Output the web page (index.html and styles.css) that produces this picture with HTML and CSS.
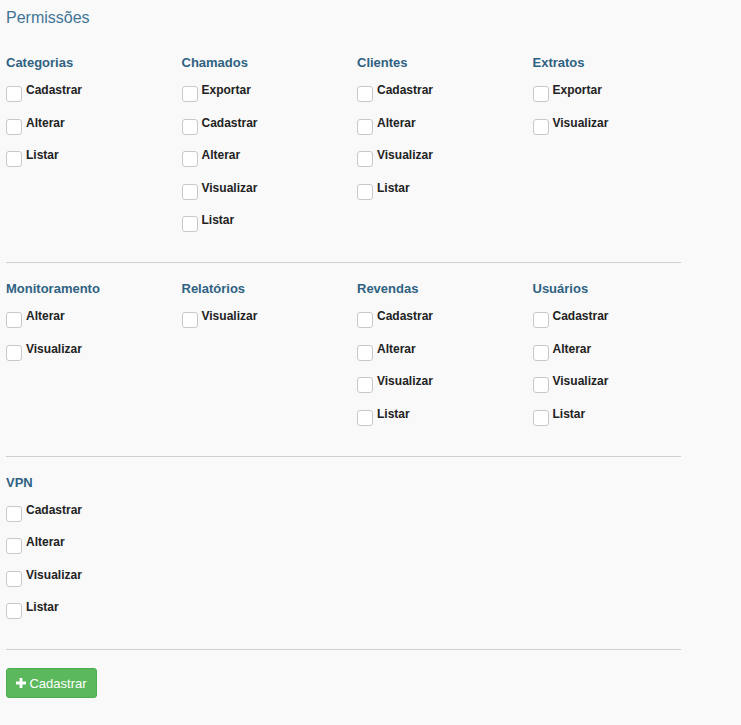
FILE: index.html
```html
<!DOCTYPE html>
<html lang="pt-BR">
<head>
    <meta charset="UTF-8">
    <meta name="viewport" content="width=device-width, initial-scale=1.0">
    <title>Permissões</title>
    <link rel="stylesheet" href="styles.css">
</head>
<body>
    <h2 class="page-title">Permissões</h2>

    <form class="perm-form">
        <div class="perm-row">
            <div class="perm-group">
                <h4>Categorias</h4>
                <label class="perm-item"><input type="checkbox"><span>Cadastrar</span></label>
                <label class="perm-item"><input type="checkbox"><span>Alterar</span></label>
                <label class="perm-item"><input type="checkbox"><span>Listar</span></label>
            </div>
            <div class="perm-group">
                <h4>Chamados</h4>
                <label class="perm-item"><input type="checkbox"><span>Exportar</span></label>
                <label class="perm-item"><input type="checkbox"><span>Cadastrar</span></label>
                <label class="perm-item"><input type="checkbox"><span>Alterar</span></label>
                <label class="perm-item"><input type="checkbox"><span>Visualizar</span></label>
                <label class="perm-item"><input type="checkbox"><span>Listar</span></label>
            </div>
            <div class="perm-group">
                <h4>Clientes</h4>
                <label class="perm-item"><input type="checkbox"><span>Cadastrar</span></label>
                <label class="perm-item"><input type="checkbox"><span>Alterar</span></label>
                <label class="perm-item"><input type="checkbox"><span>Visualizar</span></label>
                <label class="perm-item"><input type="checkbox"><span>Listar</span></label>
            </div>
            <div class="perm-group">
                <h4>Extratos</h4>
                <label class="perm-item"><input type="checkbox"><span>Exportar</span></label>
                <label class="perm-item"><input type="checkbox"><span>Visualizar</span></label>
            </div>
        </div>
        <hr>

        <div class="perm-row">
            <div class="perm-group">
                <h4>Monitoramento</h4>
                <label class="perm-item"><input type="checkbox"><span>Alterar</span></label>
                <label class="perm-item"><input type="checkbox"><span>Visualizar</span></label>
            </div>
            <div class="perm-group">
                <h4>Relatórios</h4>
                <label class="perm-item"><input type="checkbox"><span>Visualizar</span></label>
            </div>
            <div class="perm-group">
                <h4>Revendas</h4>
                <label class="perm-item"><input type="checkbox"><span>Cadastrar</span></label>
                <label class="perm-item"><input type="checkbox"><span>Alterar</span></label>
                <label class="perm-item"><input type="checkbox"><span>Visualizar</span></label>
                <label class="perm-item"><input type="checkbox"><span>Listar</span></label>
            </div>
            <div class="perm-group">
                <h4>Usuários</h4>
                <label class="perm-item"><input type="checkbox"><span>Cadastrar</span></label>
                <label class="perm-item"><input type="checkbox"><span>Alterar</span></label>
                <label class="perm-item"><input type="checkbox"><span>Visualizar</span></label>
                <label class="perm-item"><input type="checkbox"><span>Listar</span></label>
            </div>
        </div>
        <hr>

        <div class="perm-row">
            <div class="perm-group">
                <h4>VPN</h4>
                <label class="perm-item"><input type="checkbox"><span>Cadastrar</span></label>
                <label class="perm-item"><input type="checkbox"><span>Alterar</span></label>
                <label class="perm-item"><input type="checkbox"><span>Visualizar</span></label>
                <label class="perm-item"><input type="checkbox"><span>Listar</span></label>
            </div>
        </div>
        <hr>

        <button type="button" class="btn-success">
            <svg class="icon-plus" width="10" height="10" viewBox="0 0 10 10"><path d="M3.6 0h2.8v3.6H10v2.8H6.4V10H3.6V6.4H0V3.6h3.6z" fill="#fff"/></svg>
            Cadastrar
        </button>
    </form>
</body>
</html>
```

FILE: styles.css
```css
body {
    background-color: #f9f9f9;
    color: #333;
    font-family: "Liberation Sans", Arial, sans-serif;
    margin: 0;
    padding: 8px 6px 0 6px;
}

.page-title {
    margin: 0 0 25px 0;
    font-size: 16px;
    line-height: 20px;
    font-weight: normal;
    color: #3f7497;
}

.perm-row {
    display: grid;
    grid-template-columns: repeat(4, 175.5px);
}

.perm-group {
    display: flex;
    flex-direction: column;
    gap: 12.5px;
}

.perm-group h4 {
    margin: 0 0 -3.5px 0; /* 9px between title and first checkbox row */
    font-size: 13px;
    line-height: 20px;
    font-weight: bold;
    color: #2f6282;
}

.perm-item {
    display: flex;
    align-items: flex-start;
    font-size: 12px;
    line-height: 16px;
    font-weight: bold;
    color: #222;
    height: 20px;
}

/* custom square box, like the bootstrap-ish theme */
.perm-item input {
    appearance: none;
    -webkit-appearance: none;
    width: 16px;
    height: 16px;
    margin: 4px 4px 0 0;
    border: 1px solid #c8c8c8;
    border-radius: 3px;
    background: #fff;
    flex-shrink: 0;
}

hr {
    width: 675px;
    margin: 30px 0 16px 0;
    border: 0;
    border-top: 1px solid #cfcfcf;
}

.btn-success {
    margin-top: 18px; /* collapses with the hr's bottom margin */
    height: 30px;
    width: 91px;
    padding: 0;
    background-color: #5cb85c;
    border: 1px solid #4cae4c;
    border-radius: 3px;
    color: #fff;
    font-family: "Liberation Sans", Arial, sans-serif;
    font-size: 13px;
    display: flex;
    align-items: center;
    justify-content: center;
    gap: 3px;
}
```
